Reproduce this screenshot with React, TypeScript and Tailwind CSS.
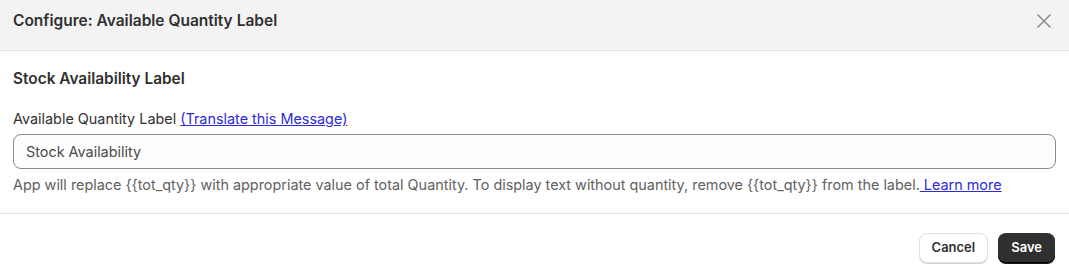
import { X } from "lucide-react";

export default function App() {
    return (
        <div className="w-[1069px] h-[276px] bg-white text-[#303030] text-[14.4px]" style={{ fontFamily: "Inter, 'Noto Sans', sans-serif" }}>
            <div className="h-[51px] bg-[#f3f3f3] border-b border-[#e3e3e3] flex items-start justify-between pt-[11px] pl-[13px] pr-[13px]">
                <h2 className="font-semibold text-[15.5px] leading-[20px]">Configure: Available Quantity Label</h2>
                <button className="text-[#8a8a8a] -mt-[2px]">
                    <X size={24} strokeWidth={1.5} />
                </button>
            </div>
            <div className="px-[13px] pt-[18px] pb-[18px] border-b border-[#e3e3e3]">
                <h3 className="font-semibold text-[15.4px] leading-[20px]">Stock Availability Label</h3>
                <div className="mt-[20px] leading-[20px]">
                    Available Quantity Label{" "}
                    <a href="#" className="text-[#2c2cd8] underline">(Translate this Message)</a>
                </div>
                <input
                    defaultValue="Stock Availability"
                    className="mt-[5px] w-full h-[35px] border border-[#8a8a8a] rounded-[8px] px-[12px] text-[#4a4a4a] bg-[#fdfdfd] outline-none"
                />
                <p className="mt-[6px] text-[#616161] leading-[20px]">
                    App will replace {"{{tot_qty}}"} with appropriate value of total Quantity. To display text without quantity, remove {"{{tot_qty}}"} from the label.
                    <a href="#" className="text-[#2c2cd8] underline"> Learn more</a>
                </p>
            </div>
            <div className="flex justify-end gap-[10px] pt-[19px] pr-[14px]">
                <button className="h-[30px] px-[12px] rounded-[8px] border border-[#e0e0e0] bg-white font-semibold text-[13px] shadow-[0_1px_0_#d4d4d4]">Cancel</button>
                <button className="h-[30px] px-[13px] rounded-[8px] bg-[#303030] text-white font-semibold text-[13px] shadow-[inset_0_-1px_0_#000,0_1px_0_#1a1a1a]">Save</button>
            </div>
        </div>
    );
}
